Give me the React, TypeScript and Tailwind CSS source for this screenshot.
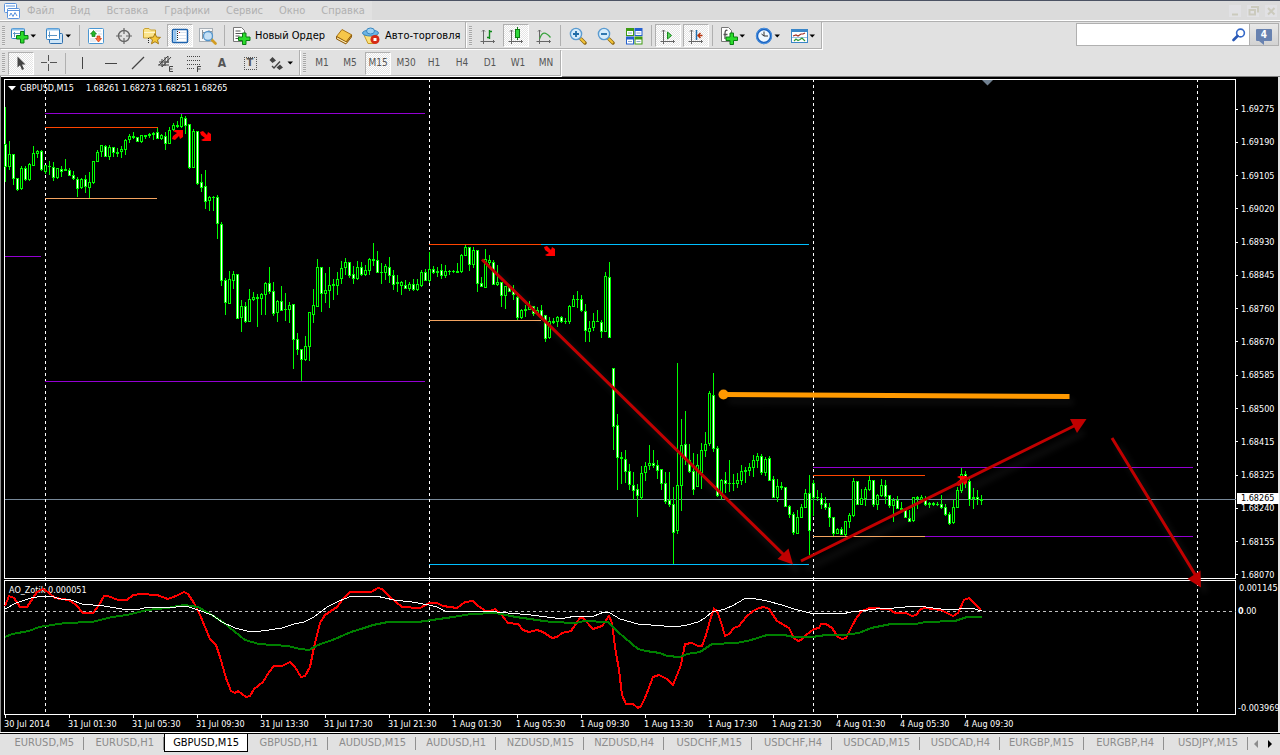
import type { ReactNode } from "react";

/* ---------- data ---------- */

// One entry per bar: high, body top, body bottom, low, and d for a falling bar.
const BARS = `107 144 167 182 d|141 154 167 170 u|154 154 179 185 d|178 178 190 191 d|166 168 189 190 u|166 168 180 181 d|163 164 180 181 u|146 153 166 166 u|150 151 154 158 u|150 151 170 171 d
165 165 172 174 u|161 166 167 175 u|162 167 178 181 d|168 168 178 179 u|166 169 172 177 d|159 169 171 171 u|168 170 176 176 d|171 175 179 180 d|177 179 189 197 d|178 179 188 189 u
175 179 187 193 d|172 182 188 198 u|161 161 183 184 u|150 152 162 162 u|145 145 152 157 u|145 146 157 157 d|145 147 157 160 u|147 147 153 157 d|148 152 154 157 u|146 149 152 158 u
139 140 150 155 u|134 136 140 143 u|132 136 138 139 u|137 137 142 142 d|135 135 142 143 u|135 135 137 139 u|133 134 136 138 u|132 133 135 140 u|127 132 139 139 d|134 135 139 140 u
132 136 144 150 d|127 130 144 144 u|123 125 130 131 u|121 125 127 128 u|113 117 127 128 u|116 118 126 134 d|124 124 168 169 d|129 131 168 168 u|131 131 184 185 d|174 182 188 192 d
170 186 202 209 d|196 197 201 211 u|196 197 198 211 u|195 197 224 239 d|222 224 281 286 d|278 280 303 315 d|271 279 304 304 u|271 274 281 289 u|274 274 319 319 d|300 306 318 332 u
302 306 322 323 d|289 299 322 322 u|292 297 300 301 u|294 297 299 327 u|293 294 299 315 u|282 283 295 315 u|267 283 292 294 d|282 291 314 316 d|300 301 313 322 u|286 301 311 311 d
293 309 310 321 u|302 305 310 323 u|304 304 340 369 d|333 339 350 355 d|349 349 360 382 d|336 346 360 361 u|312 312 347 361 u|289 305 315 323 u|259 267 307 307 u|267 267 294 312 d
273 290 294 303 u|267 285 291 308 u|279 284 286 300 u|272 279 286 295 u|261 268 279 284 u|258 262 268 275 u|262 262 276 278 d|266 274 279 284 d|261 267 279 280 u|262 267 275 276 d
265 270 275 276 u|258 259 271 275 u|243 259 261 266 u|251 260 273 273 d|263 272 273 284 u|264 266 273 280 u|257 267 276 283 d|270 275 285 290 d|275 282 284 292 u|281 282 286 295 u
280 285 289 289 d|282 284 289 291 u|279 284 290 291 d|279 284 290 291 u|270 272 286 287 u|269 272 281 281 d|252 269 281 283 u|266 269 273 274 d|267 271 273 277 u|264 270 276 279 d
265 271 276 278 u|270 271 272 275 u|270 271 272 273 u|263 271 273 273 u|254 255 272 273 u|245 247 256 256 u|247 247 265 271 d|247 250 265 268 u|250 250 284 292 d|277 283 287 287 d
249 259 288 288 u|255 260 263 268 u|260 262 285 285 d|265 282 285 286 u|282 282 296 307 d|286 286 296 309 u|285 287 292 292 d|285 290 295 300 d|295 297 318 320 d|309 310 318 319 u
305 309 311 317 u|301 306 310 310 u|306 306 314 316 d|307 310 314 315 u|305 310 317 320 d|315 315 339 342 d|317 321 338 339 u|318 321 323 324 u|316 317 322 327 u|316 317 322 323 d
318 321 322 324 u|305 306 322 324 u|295 299 307 307 u|291 299 300 308 u|295 299 311 312 d|304 311 331 342 d|321 328 332 342 u|313 321 328 331 u|310 321 322 322 u|320 322 332 338 d
272 276 332 332 u|262 277 338 338 d|368 368 427 450 d|414 425 458 490 d|452 457 459 484 u|450 459 472 483 d|464 471 485 490 d|472 485 491 500 d|484 489 496 517 d|466 473 498 500 u
462 466 473 481 u|445 463 466 470 u|450 463 466 468 d|460 465 471 479 d|469 469 484 490 d|472 483 502 504 d|472 500 505 507 d|487 504 533 564 d|363 485 531 534 u|419 445 486 511 u
411 444 460 465 d|444 460 472 473 d|453 471 490 495 d|454 465 487 487 u|443 450 473 489 u|432 444 451 457 u|391 393 444 446 u|373 395 449 452 d|446 448 496 497 d|479 480 496 500 u
472 480 484 493 d|460 483 484 492 u|474 483 484 491 u|473 480 484 488 u|465 471 481 485 u|467 470 472 483 u|463 467 471 476 u|455 460 468 477 u|453 456 461 468 u|454 456 473 475 d
457 459 473 476 u|456 458 481 481 d|476 479 498 498 d|479 486 498 502 u|482 486 488 490 u|487 487 507 507 d|505 506 515 518 d|512 514 533 535 d|510 517 534 534 u|504 507 518 518 u
489 493 508 508 u|475 493 531 555 d|480 483 498 516 d|490 497 498 501 u|493 498 505 509 d|497 503 508 510 d|503 507 518 527 d|517 517 534 536 d|528 529 534 534 u|527 529 535 535 d
521 521 535 536 u|513 515 522 528 u|478 481 516 517 u|481 481 505 505 d|489 498 505 505 u|487 489 499 506 u|476 480 490 491 u|480 480 505 507 d|494 495 505 510 u|479 485 496 497 u
480 485 497 504 d|495 495 506 508 d|498 500 506 522 u|496 500 509 509 d|502 508 510 510 u|508 510 518 518 d|510 518 522 522 d|497 497 521 522 u|496 497 499 509 u|495 497 500 500 u
496 500 505 506 d|502 503 505 508 u|502 503 505 506 u|502 504 505 506 u|495 504 508 509 d|504 507 515 516 d|512 514 524 525 d|500 507 523 524 u|487 490 508 508 u|467 474 491 493 u
471 474 479 488 d|479 481 500 506 d|488 497 499 509 u|490 497 500 505 d|495 499 501 505 u`
  .split(/[|\n]/)
  .map((entry, i) => {
    const [high, top, bottom, low, kind] = entry.split(" ");
    return { x: 5 + 4 * i, high: +high, top: +top, bottom: +bottom, low: +low, falling: kind === "d" };
  });

const FAST =
  "5,606 9,596 14,598 20,607 27,607 31,601 37,592 43,589 48,592 55,598 69,600 76,605 83,613 93,613 99,605 104,596 108,596 118,600 127,600 133,595 141,594 157,595 168,599 176,596 184,592 188,594 194,603 200,615 210,639 216,645 220,657 226,678 231,691 235,693 238,691 246,697 250,696 254,689 263,682 269,672 274,666 282,666 290,662 295,667 301,677 305,676 310,667 314,647 320,623 325,615 337,607 343,599 350,592 371,592 378,588 382,589 390,597 402,607 420,608 429,603 437,603 443,606 457,608 465,602 473,601 478,606 486,611 490,611 495,609 500,613 508,623 518,624 523,630 529,632 537,630 543,632 552,638 557,637 562,633 571,631 580,618 583,618 593,629 602,626 609,616 612,623 615,647 619,670 622,695 626,704 633,704 638,708 641,706 645,698 650,685 653,677 659,675 667,679 673,685 677,675 681,665 685,644 692,643 698,646 702,646 706,635 711,617 714,609 717,611 721,622 725,636 729,634 734,628 739,626 746,617 753,611 759,608 764,607 769,609 777,621 789,628 794,638 798,641 801,640 806,635 814,629 819,628 821,624 826,624 832,628 838,637 842,639 846,638 851,628 857,617 862,611 870,608 889,609 895,613 906,613 912,616 916,615 921,609 925,608 941,610 953,616 958,613 964,600 969,598 973,602 981,610";
const SLOW =
  "5,637 12,634 29,631 39,627 65,623 92,622 112,617 127,615 147,610 167,608 184,605 198,607 212,615 224,623 245,640 259,644 288,646 300,649 309,650 318,645 335,639 351,632 361,629 373,625 388,622 418,622 439,619 453,617 471,614 496,613 516,617 551,622 576,623 584,621 608,622 618,632 638,649 646,651 660,653 667,656 680,657 687,654 700,652 712,644 737,643 751,640 767,635 784,635 794,637 812,637 826,635 844,635 859,633 871,628 891,624 916,624 925,622 955,621 967,617 982,617";
const MEDIAN =
  "5,609 16,603 31,598 43,596 50,596 61,599 71,600 82,604 104,606 122,609 135,610 149,607 167,608 176,607 186,606 198,610 212,615 222,622 235,628 247,631 261,631 269,630 282,628 294,624 304,622 314,617 327,607 339,601 352,596 365,596 376,596 394,600 412,602 429,605 437,607 445,611 486,611 508,613 531,615 555,618 565,618 576,616 594,616 604,612 610,613 620,619 638,624 664,626 675,627 687,625 698,622 705,618 712,612 725,609 734,605 744,599 751,598 767,601 782,605 794,609 810,613 842,614 851,612 876,609 894,608 916,606 926,607 948,610 971,608 982,611";

const LEVELS: [number, number, number, string][] = [
  [45, 425, 113, "#9400d3"],
  [45, 158, 127, "#ff4500"],
  [45, 157, 198, "#f4a460"],
  [5, 41, 256, "#9400d3"],
  [45, 425, 381, "#9400d3"],
  [429, 541, 244, "#ff4500"],
  [541, 809, 244, "#00bfff"],
  [429, 541, 320, "#f4a460"],
  [429, 809, 564, "#00bfff"],
  [813, 1193, 467, "#9400d3"],
  [813, 925, 475, "#ff4500"],
  [813, 925, 536, "#f4a460"],
  [925, 1193, 536, "#9400d3"],
];

const PRICES = ["1.69275", "1.69190", "1.69105", "1.69020", "1.68930", "1.68845", "1.68760", "1.68670", "1.68585", "1.68500", "1.68415", "1.68325", "1.68240", "1.68155", "1.68070"];

const TIMES = ["30 Jul 2014", "31 Jul 01:30", "31 Jul 05:30", "31 Jul 09:30", "31 Jul 13:30", "31 Jul 17:30", "31 Jul 21:30", "1 Aug 01:30", "1 Aug 05:30", "1 Aug 09:30", "1 Aug 13:30", "1 Aug 17:30", "1 Aug 21:30", "4 Aug 01:30", "4 Aug 05:30", "4 Aug 09:30"];

const TABS: [string, string][] = [
  ["EURUSD,M5", "w-[84px]"],
  ["EURUSD,H1", "w-20"],
  ["GBPUSD,M15", "w-[84px]"],
  ["GBPUSD,H1", "w-20"],
  ["AUDUSD,M15", "w-[88px]"],
  ["AUDUSD,H1", "w-20"],
  ["NZDUSD,M15", "w-[88px]"],
  ["NZDUSD,H4", "w-20"],
  ["USDCHF,M15", "w-[88px]"],
  ["USDCHF,H4", "w-20"],
  ["USDCAD,M15", "w-[88px]"],
  ["USDCAD,H4", "w-20"],
  ["EURGBP,M15", "w-[84px]"],
  ["EURGBP,H4", "w-20"],
  ["USDJPY,M15", "w-[84px]"],
];

/* ---------- toolbar parts ---------- */

function Icon({ children, w = 18 }: { children: ReactNode; w?: number }) {
  return (
    <svg width={w} height={18} viewBox={`0 0 ${w} 18`} fill="none" className="shrink-0" aria-hidden="true">
      {children}
    </svg>
  );
}

function Tool({ label, pressed, children }: { label: string; pressed?: boolean; children: ReactNode }) {
  return (
    <button
      aria-label={label}
      aria-pressed={pressed}
      className={
        "mx-px flex h-[23px] w-[26px] items-center justify-center border text-[#555] " +
        (pressed
          ? "border-t-[#b0b0b0] border-r-white border-b-white border-l-[#b0b0b0] bg-[repeating-conic-gradient(#ffffff_0_25%,#e4e4e4_0_50%)] bg-[length:2px_2px]"
          : "border-transparent")
      }
    >
      {children}
    </button>
  );
}

function DropTool({ label, children }: { label: string; children: ReactNode }) {
  return (
    <button aria-label={label} className="flex h-[23px] w-[35px] items-center gap-px pl-1">
      {children}
      <svg width="7" height="4" viewBox="0 0 7 4" className="shrink-0" aria-hidden="true">
        <path d="M0.500 0.500H6L3.250 3.500Z" fill="#000" />
      </svg>
    </button>
  );
}

function Grip() {
  return <span className="mx-[2px] h-5 w-[3px] bg-[repeating-linear-gradient(#a8a8a8_0_1px,#e8e8e8_1px_2px)]" />;
}

function Sep({ space = "mx-[2px]" }: { space?: string }) {
  return <span className={"h-[21px] w-px bg-[#b0b0b0] " + space} />;
}

function Bar({ children, inset = "" }: { children: ReactNode; inset?: string }) {
  return (
    <div className={"flex items-center border-r border-b border-[#b0b0b0] pt-[2px] pb-px shadow-[1px_1px_0_#fff] " + inset}>
      {children}
    </div>
  );
}

const Plus = ({ x, y }: { x: number; y: number }) => (
  <path
    transform={`translate(${x} ${y})`}
    d="M-1.500 -5.500h3.500v4h4v3.500h-4v4h-3.500v-4h-4v-3.500h4z"
    fill="#2bdc2b"
    stroke="#0a7d14"
  />
);

const Magnifier = ({ minus }: { minus?: boolean }) => (
  <Icon>
    <path d="M12 12l4 4" stroke="#8a6410" strokeWidth="3.400" strokeLinecap="round" />
    <path d="M12 12l3.500 3.500" stroke="#f3c53a" strokeWidth="2" strokeLinecap="round" />
    <circle cx="7" cy="7" r="5.600" fill="#d6ecfb" stroke="#5a9bd0" strokeWidth="1.400" />
    <path d={minus ? "M4 7h6" : "M4 7h6M7 4v6"} stroke="#1f6ca8" strokeWidth="1.800" />
  </Icon>
);

const Axes = ({ children }: { children?: ReactNode }) => (
  <Icon>
    <path d="M4.500 3v14M1.500 14.500H15.500M3 4.500l1.500-1.500 1.500 1.500M14 13l1.500 1.500-1.500 1.500" stroke="#666" />
    {children}
  </Icon>
);

/* ---------- chart drawing ---------- */

const DOWN_ARROW = "M0 1L3 0L7 4L8 1L11 3V10H3L1 9L5 7L1 4Z";

function ChartDrawing() {
  return (
    <svg className="pointer-events-none absolute inset-0 h-full w-full" aria-label="GBPUSD M15" role="img">
      <defs>
        <filter id="soft" x="-10%" y="-200%" width="120%" height="500%">
          <feGaussianBlur stdDeviation="3" />
        </filter>
      </defs>
      <rect x="1" y="420" width="100%" height="1" fill="#778899" />
      <line x1="1" x2="100%" y1="532.500" y2="532.500" stroke="#c0c0c0" strokeDasharray="3 3" shapeRendering="crispEdges" />
      <g transform="translate(-4 -79)">
        <g shapeRendering="crispEdges">
          {[45, 429, 813, 1197].map((x) => (
            <line key={x} x1={x + 0.5} x2={x + 0.5} y1="79" y2="714" stroke="#fff" strokeDasharray="3 3" />
          ))}
          {BARS.map((b) => (
            <g key={b.x}>
              <rect x={b.x} y={b.high} width="1" height={b.low - b.high} fill="#00ff00" />
              <rect x={b.x - 1} y={b.top} width="3" height={b.bottom - b.top} fill="#00ff00" />
              {b.bottom - b.top > 2 && (
                <rect x={b.x} y={b.top + 1} width="1" height={b.bottom - b.top - 2} fill={b.falling ? "#ffffff" : "#000000"} />
              )}
            </g>
          ))}
          {LEVELS.map(([x1, x2, y, color]) => (
            <rect key={`${x1}-${y}`} x={x1} y={y} width={x2 - x1} height="1" fill={color} />
          ))}
          <polyline points={FAST} fill="none" stroke="#ff0000" strokeWidth="2" />
          <polyline points={SLOW} fill="none" stroke="#008000" strokeWidth="2" />
          <polyline points={MEDIAN} fill="none" stroke="#ffffff" strokeWidth="1" />
        </g>
        <path d="M982 80H993L987.500 85.500Z" fill="#708090" />
        <g fill="#ff0000">
          <path d={DOWN_ARROW} transform="translate(200 131)" />
          <path d={DOWN_ARROW} transform="translate(544 246)" />
          <path d={DOWN_ARROW} transform="translate(172 140) scale(1 -1)" />
          <path d={DOWN_ARROW} transform="translate(956 486) scale(1 -1)" />
        </g>
        <g opacity="0.050" filter="url(#soft)" stroke="#fff" strokeWidth="6">
          <path d="M728 401L1074 402M806 569L1084 432M1118 446L1206 592M489 267L798 571" />
        </g>
        <path d="M723 394.500L1069.500 396.500" stroke="#ff9900" strokeWidth="5" />
        <circle cx="723.500" cy="394.500" r="5" fill="#ff9900" />
        <g stroke="#c00000" strokeWidth="3">
          <path d="M482 259.500L784 555M801 561L1076 425M1112 438L1196 576" />
        </g>
        <g fill="#c00000">
          <path d="M793 564.500L777.500 559L788.500 548.500Z" />
          <path d="M1086.500 419L1070 419L1077 433Z" />
          <path d="M1201 587.500L1187.500 579L1200.500 570.500Z" />
        </g>
      </g>
    </svg>
  );
}

export default function App() {
  return (
    <div className="flex min-h-screen flex-col overflow-hidden bg-[#e1e1e1] font-['DejaVu_Sans_Condensed','DejaVu_Sans',sans-serif] text-[11px] leading-[14px] text-black">
      {/* menu bar */}
      <header className="flex h-[21px] items-center border-t border-b border-t-[#4b5263] border-b-white bg-[#dbdbdb]">
        <nav className="flex h-full w-[372px] items-center bg-[#e1e1e1] pl-1 text-[#b0b0b0]">
          <Icon>
            <rect x="0.500" y="1.500" width="12" height="9" rx="1" fill="#fff" stroke="#5b93dd" />
            <path d="M2 4h9M3 8l2-2 1 1" stroke="#5b93dd" />
            <rect x="3.500" y="6.500" width="12" height="10" rx="1" fill="#fff" stroke="#5b93dd" />
            <path d="M3.500 8.500h12M5.500 14l1.500-3 2 3.500 2-4 2 3.500" stroke="#5b93dd" />
          </Icon>
          <ul className="ml-[5px] flex gap-4">
            {["Файл", "Вид", "Вставка", "Графики", "Сервис", "Окно", "Справка"].map((m) => (
              <li key={m}>
                <button>{m}</button>
              </li>
            ))}
          </ul>
        </nav>
        <div className="ml-auto flex gap-[6px] pr-[3px]">
          {[
            ["Свернуть", "M3 9.500h6"],
            ["Восстановить", "M4 2h7v5.500M2.500 5v4.500h5.500V5z"],
            ["Закрыть", "M3 3l6.500 6.500M9.500 3L3 9.500"],
          ].map(([label, d]) => (
            <button key={label} aria-label={label} className="bg-[#e1e1e4]">
              <svg width="12" height="12" viewBox="0 0 12 12" fill="none" aria-hidden="true">
                <path d={d} stroke="#cbcabd" strokeWidth="2" />
              </svg>
            </button>
          ))}
        </div>
      </header>

      {/* standard toolbar */}
      <div className="flex justify-between border-t border-[#b0b0b0] pb-px">
        <div className="flex">
          <Bar>
            <Grip />
            <DropTool label="Новый график">
              <Icon>
                <rect x="0.500" y="1.500" width="13" height="10" rx="1" fill="#fff" stroke="#2f7fc2" />
                <path d="M1 2.500h12" stroke="#8cc0ea" strokeWidth="2" />
                <path d="M3.500 5v5M2 6.500h8" stroke="#5c94c4" />
                <Plus x={11} y={10} />
              </Icon>
            </DropTool>
            <DropTool label="Профили">
              <Icon>
                <rect x="3.500" y="6.500" width="13" height="10" rx="1" fill="#cfe6f8" stroke="#2f6fae" />
                <rect x="0.500" y="1.500" width="13" height="11" rx="1" fill="#fff" stroke="#2f7fc2" />
                <path d="M1 2.500h12" stroke="#8cc0ea" strokeWidth="2" />
                <path d="M3.500 4.500v6M2 8.500h9" stroke="#5c94c4" />
              </Icon>
            </DropTool>
            <Sep />
            <Tool label="Обзор рынка">
              <Icon>
                <rect x="1.500" y="1.500" width="15" height="15" rx="1" fill="#fff" stroke="#4b97d2" />
                <path d="M8 4h6M11 7h4M3 12h5M3 14h6" stroke="#cfd9e4" />
                <path d="M6.500 3.500l3 3.500H8v2.500H5V7H3.500z" fill="#26b52a" stroke="#12801a" strokeWidth="0.700" />
                <path d="M11.500 15l3-3.500H13V9h-3v2.500H8.500z" fill="#ff6a3a" stroke="#c8330c" strokeWidth="0.700" />
              </Icon>
            </Tool>
            <Tool label="Окно данных">
              <Icon>
                <circle cx="9" cy="9" r="5.500" stroke="#666" strokeWidth="1.400" />
                <path d="M9 1v6M9 11v6M1 9h6M11 9h6" stroke="#666" strokeWidth="1.200" />
              </Icon>
            </Tool>
            <Tool label="Избранное">
              <Icon>
                <path d="M0.500 11V2.500l1.500-1h4l1.500 1.500H12.500V11z" fill="#fbe48a" stroke="#c9a131" />
                <path d="M1 5.500h11" stroke="#fff6cc" />
                <path d="M5.500 11v6" stroke="#222" strokeDasharray="1 1" />
                <path d="M12 6.500l1.600 3.600 3.900.3-3 2.500 1 3.900L12 14.700l-3.500 2.100 1-3.900-3-2.500 3.900-.3z" fill="#f5c83a" stroke="#a87d16" />
              </Icon>
            </Tool>
            <Tool label="Навигатор" pressed>
              <Icon>
                <rect x="1.500" y="2.500" width="15" height="13" rx="1" fill="#fff" stroke="#1c62ad" strokeWidth="1.500" />
                <path d="M4 3v12" stroke="#8fc0ec" strokeWidth="3" />
                <path d="M7 5.500h8M7 8.500h8M7 11.500h8" stroke="#dbe5f0" />
                <path d="M6.500 4v10" stroke="#222" strokeDasharray="1 1" />
                <path d="M8 5.500h1" stroke="#e02020" />
              </Icon>
            </Tool>
            <Tool label="Тестер стратегий">
              <Icon>
                <rect x="0.500" y="1.500" width="13" height="13" fill="#f6f7f8" stroke="#a7aeb5" />
                <path d="M3.500 3v9M3 5.500h4M10 3v3M8 4.500h5" stroke="#8b949c" />
                <path d="M12.500 12.500l4 4" stroke="#d29c22" strokeWidth="2.600" strokeLinecap="round" />
                <circle cx="9" cy="9" r="4.500" fill="#bcdcf5" fillOpacity="0.850" stroke="#5596cc" strokeWidth="1.300" />
              </Icon>
            </Tool>
            <Sep />
            <button className="flex items-center gap-1 pr-[5px] pl-[6px] whitespace-nowrap">
              <Icon>
                <path d="M0.500 0.500h8l3 3v11h-11z" fill="#fff" stroke="#777" />
                <path d="M2.500 4h5M2.500 6.500h7M2.500 9h4M2.500 11.500h3" stroke="#555" />
                <Plus x={11} y={11.5} />
              </Icon>
              Новый Ордер
            </button>
            <Tool label="Редактор MetaQuotes">
              <Icon>
                <path d="M1.500 9.500L7 2.500l10 5.500-5.500 7z" fill="#f6c64a" stroke="#a8741a" />
                <path d="M1.500 9.500v2.500l9.500 5 5.500-7V8l-5.500 7z" fill="#d89a2c" stroke="#8f5f12" />
                <path d="M2 11l9.500 5" stroke="#fdf2c8" />
              </Icon>
            </Tool>
            <button className="flex items-center gap-[5px] pr-[5px] pl-1 whitespace-nowrap">
              <Icon>
                <path d="M2 8l4 8.500h6L15 8z" fill="#fbe07a" stroke="#c69a28" />
                <ellipse cx="8.500" cy="6" rx="8" ry="3" fill="#6bb4e4" stroke="#3a86bf" />
                <ellipse cx="8.500" cy="4" rx="4" ry="3" fill="#9bd0f2" stroke="#3a86bf" />
                <circle cx="13" cy="12.500" r="4.500" fill="#d62a16" />
                <rect x="11.500" y="11" width="3" height="3" fill="#fff" />
              </Icon>
              Авто-торговля
            </button>
          </Bar>
          <Bar inset="pl-px">
            <Grip />
            <Tool label="Бары">
              <Axes>
                <path d="M10.500 3v9M10.500 4.500H13M8 10.500h2.500" stroke="#0f8a1a" strokeWidth="1.400" />
              </Axes>
            </Tool>
            <Tool label="Свечи" pressed>
              <Axes>
                <path d="M10.500 0v13" stroke="#0f7a14" />
                <rect x="8.500" y="2.500" width="4" height="8" fill="#2fd83a" stroke="#0f7a14" />
              </Axes>
            </Tool>
            <Tool label="Линия">
              <Axes>
                <path d="M4.500 12C7 5 10 4 15.500 10.500" stroke="#3aa33f" strokeWidth="1.300" />
              </Axes>
            </Tool>
            <Sep space="mr-[3px] ml-[2px]" />
            <Tool label="Увеличить">
              <Magnifier />
            </Tool>
            <Tool label="Уменьшить">
              <Magnifier minus />
            </Tool>
            <Tool label="Расположить окна">
              <Icon>
                <path d="M1 1h8v8H1zM9.500 9.500h8v8h-8z" fill="#3e9b14" />
                <path d="M9.500 1h8v8h-8zM1 9.500h8v8H1z" fill="#2560cf" />
                <path d="M2 4h6v4H2zM10.500 4h6v4h-6zM2 12.500h6v4H2zM10.500 12.500h6v4h-6z" fill="#fff" />
                <path d="M3 6h4M11.500 6h4M3 14.500h4M11.500 14.500h4" stroke="#8aa8c8" />
              </Icon>
            </Tool>
            <Sep space="mr-[2px] ml-[3px]" />
            <Tool label="Автопрокрутка" pressed>
              <Axes>
                <path d="M8.500 5v7l4-3.500z" fill="#5fd95f" stroke="#168a1c" />
              </Axes>
            </Tool>
            <Tool label="Сдвиг графика" pressed>
              <Axes>
                <path d="M9.500 3v10" stroke="#1f6fb0" strokeWidth="1.500" />
                <path d="M15.500 8.500H11M13.500 6L11 8.500l2.500 2.500" stroke="#b8340c" strokeWidth="1.400" />
              </Axes>
            </Tool>
            <Sep space="mr-[3px] ml-[2px]" />
            <DropTool label="Индикаторы">
              <Icon>
                <path d="M1.500 0.500h7l3 3v11h-10z" fill="#fff" stroke="#777" />
                <path d="M7.500 3.500c-2-1-2.500 1-2.500 3V12M3.500 7.500h4" stroke="#555" strokeWidth="1.300" />
                <Plus x={11.5} y={11.5} />
              </Icon>
            </DropTool>
            <DropTool label="Периоды">
              <Icon>
                <circle cx="9" cy="9" r="7" fill="#eef7ff" stroke="#1a62c0" strokeWidth="2.400" />
                <circle cx="9" cy="9" r="7.600" stroke="#63a9ee" strokeWidth="0.700" />
                <path d="M9 4.500V9h4M9 9L6.500 7" stroke="#333" />
              </Icon>
            </DropTool>
            <DropTool label="Шаблоны">
              <Icon>
                <rect x="1.500" y="2.500" width="16" height="13" fill="#fff" stroke="#3a86c8" />
                <path d="M2 4h15" stroke="#3a86c8" strokeWidth="2" />
                <path d="M3 9l3-1 2 1 3-2h2l2-1" stroke="#a03028" strokeWidth="1.200" />
                <path d="M2 10.500h15" stroke="#9ac3e6" />
                <path d="M4 14l2-2 2 1.500 2-1 2-1.500 3 3" stroke="#2f9a36" strokeWidth="1.200" />
              </Icon>
            </DropTool>
          </Bar>
        </div>
        <div className="flex h-[24px] pt-px pr-px">
          <label className="flex w-[174px] items-center border border-[#b0b0b0] bg-white pr-[3px]">
            <input type="search" aria-label="Поиск" className="min-w-0 flex-1 bg-transparent px-1 outline-none" />
            <svg width="14" height="14" viewBox="0 0 14 14" fill="none" aria-hidden="true">
              <circle cx="8.500" cy="5" r="3.900" stroke="#3468c8" strokeWidth="1.600" />
              <path d="M5.500 8L1.500 12" stroke="#2a58b4" strokeWidth="2.600" strokeLinecap="round" />
            </svg>
          </label>
          <button aria-label="Сообщения: 4" className="flex w-[29px] items-center justify-center border border-l-0 border-[#b0b0b0] bg-gradient-to-b from-[#e8e8e8] to-[#d2d2d2]">
            <span className="relative h-3 w-4 rounded-[1px] bg-[#6882b0] text-center text-[10px] leading-3 font-bold text-white">
              4
              <svg className="absolute top-3 left-[3px]" width="5" height="4" viewBox="0 0 5 4" aria-hidden="true">
                <path d="M0 0H5V4Z" fill="#6882b0" />
              </svg>
            </span>
          </button>
        </div>
      </div>

      {/* drawing tools and periods */}
      <div className="flex h-[27px] border-b border-[#808080] text-[10px]">
        <Bar>
          <Grip />
          <Tool label="Курсор" pressed>
            <Icon>
              <path d="M5.500 2.500v11l2.500-2.300 2 4.800 2-.9-2-4.600h3.500z" fill="#444" />
            </Icon>
          </Tool>
          <Tool label="Перекрестие">
            <Icon>
              <path d="M8.500 1v6M8.500 10v7M1 8.500h6M10 8.500h7" stroke="#555" />
            </Icon>
          </Tool>
          <Sep />
          <Tool label="Вертикальная линия">
            <Icon>
              <path d="M9.500 3v12" stroke="#444" />
            </Icon>
          </Tool>
          <Tool label="Горизонтальная линия">
            <Icon>
              <path d="M4 9.500h12" stroke="#444" />
            </Icon>
          </Tool>
          <Tool label="Трендовая линия">
            <Icon>
              <path d="M3 15L15 3" stroke="#444" strokeWidth="1.200" />
            </Icon>
          </Tool>
          <Tool label="Равноудалённый канал">
            <Icon>
              <path d="M2 11L11 2M5 13l9-10M2 8h10M1 11h11M5 5v8M8 3v9M11 2v7" stroke="#444" />
              <path d="M16 12.500h-3.500v5H16M12.500 15h3" stroke="#444" />
            </Icon>
          </Tool>
          <Tool label="Линии Фибоначчи">
            <Icon>
              <path d="M2 2.500h14M2 6.500h14M2 10.500h14M2 14.500h8" stroke="#444" strokeDasharray="1 1" />
              <path d="M16 12.500h-3.500v5.500M12.500 15h3" stroke="#444" />
            </Icon>
          </Tool>
          <Tool label="Текст">
            <span className="text-[12px] font-bold text-[#555]">A</span>
          </Tool>
          <Tool label="Текстовая метка">
            <span className="flex size-[13px] items-center justify-center border border-dotted border-[#555] text-[11px] leading-3 font-bold text-[#555]">T</span>
          </Tool>
          <DropTool label="Стрелки">
            <Icon>
              <path d="M4.500 3l3.500 3.500-3.500 2.500L1.500 6zM12 10.500l3 3-3.500 2.500-3-2.500z" fill="#444" />
              <path d="M4 12l2 2 6-6.500" stroke="#444" strokeWidth="1.400" />
            </Icon>
          </DropTool>
        </Bar>
        <Bar inset="pl-px">
          <Grip />
          {["M1", "M5", "M15", "M30", "H1", "H4", "D1", "W1", "MN"].map((p) => (
            <Tool key={p} label={p} pressed={p === "M15"}>
              {p}
            </Tool>
          ))}
        </Bar>
      </div>

      {/* chart window */}
      <main className="border-r-2 border-l border-r-[#e1e1e1] border-l-[#909090] bg-black pt-[2px] pl-[3px] text-[9px] leading-3 text-white">
        <div className="flex">
          <div className="relative min-w-0 flex-1">
            <section className="h-[500px] border border-white pt-[2px] pl-[3px]">
              <h1 className="flex items-center gap-1">
                <svg width="8" height="5" viewBox="0 0 8 5" aria-hidden="true">
                  <path d="M0 0H8L4 4.500Z" fill="#fff" />
                </svg>
                <span className="mr-2">GBPUSD,M15</span>
                <span>1.68261 1.68273 1.68251 1.68265</span>
              </h1>
            </section>
            <section className="mt-px h-[135px] border border-white pt-[3px] pl-1">
              <h2>AO_Zotik 0.000051</h2>
            </section>
            <ChartDrawing />
          </div>
          <div className="w-[42px]">
            <div className="relative h-[500px] pt-[24px]">
              <ol className="flex h-[478px] flex-col justify-between">
                {PRICES.map((p) => (
                  <li key={p} className="flex items-center gap-[3px]">
                    <span className="h-px w-[2px] bg-white" />
                    {p}
                  </li>
                ))}
              </ol>
              <output className="absolute top-[414px] left-px w-full bg-white pl-1 leading-[11px] text-black">1.68265</output>
            </div>
            <div className="flex h-[136px] flex-col pt-[3px] pb-px whitespace-nowrap">
              <span className="pl-[3px]">0.001145</span>
              <span className="mt-[11px] pl-[2px]">
                <b>0</b>.00
              </span>
              <span className="mt-auto pl-[2px]">-0.003969</span>
            </div>
          </div>
        </div>
        <ol className="flex h-[18px] pl-px">
          {TIMES.map((t) => (
            <li key={t} className="flex w-16 shrink-0 flex-col whitespace-nowrap">
              <span className="h-[3px] w-px bg-white" />
              <span className="-ml-px">{t}</span>
            </li>
          ))}
        </ol>
      </main>

      {/* chart tabs */}
      <footer className="flex grow items-start border-t border-black text-[11px] shadow-[0_-1px_0_#fff]">
        <div role="tablist" className="flex text-[#8c8c8c]">
          {TABS.map(([name, width]) => {
            const active = name === "GBPUSD,M15";
            return (
              <button
                key={name}
                role="tab"
                aria-selected={active}
                className={
                  "flex h-[18px] items-center justify-end whitespace-nowrap " +
                  width +
                  (active
                    ? " border-x border-b border-black bg-white pr-2 text-black"
                    : " relative pr-[10px] after:absolute after:top-[3px] after:right-0 after:h-[13px] after:w-px after:bg-[#909090]")
                }
              >
                {name}
              </button>
            );
          })}
        </div>
        <div className="ml-auto flex gap-2 pt-[6px] pr-[7px]">
          <button aria-label="Назад">
            <svg width="6" height="8" viewBox="0 0 6 8" aria-hidden="true">
              <path d="M5 0V8L1 4Z" fill="#8c8c8c" />
            </svg>
          </button>
          <button aria-label="Вперёд">
            <svg width="6" height="8" viewBox="0 0 6 8" aria-hidden="true">
              <path d="M1 0V8L5 4Z" fill="#000" />
            </svg>
          </button>
        </div>
      </footer>
    </div>
  );
}
